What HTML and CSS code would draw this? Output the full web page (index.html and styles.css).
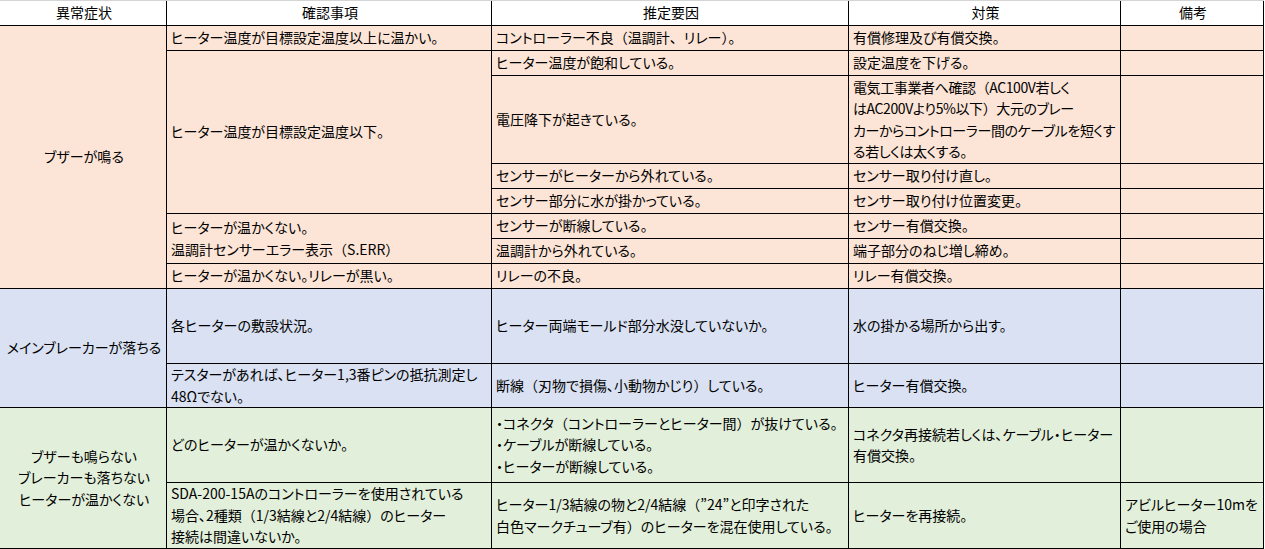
FILE: index.html
```html
<!DOCTYPE html>
<html lang="ja">
<head>
<meta charset="utf-8">
<title>異常症状</title>
<link rel="stylesheet" href="styles.css">
</head>
<body>
<div class="sheet">
  <div class="c h">異常症状</div>
  <div class="c h">確認事項</div>
  <div class="c h">推定要因</div>
  <div class="c h">対策</div>
  <div class="c h">備考</div>

  <div class="c o ctr s8">ブザーが鳴る</div>
  <div class="c o">ヒーター温度が目標設定温度以上に温かい。</div>
  <div class="c o">コントローラー不良<span class="p">（</span>温調計<span class="p">、</span>リレー<span class="p">）</span><span class="p">。</span></div>
  <div class="c o">有償修理及び有償交換。</div>
  <div class="c o"></div>

  <div class="c o s4">ヒーター温度が目標設定温度以下。</div>
  <div class="c o">ヒーター温度が飽和している。</div>
  <div class="c o">設定温度を下げる。</div>
  <div class="c o"></div>

  <div class="c o">電圧降下が起きている。</div>
  <div class="c o tight">電気工事業者へ確認<span class="p">（</span>AC100V若しく<br>はAC200Vより5%以下<span class="p">）</span>大元のブレー<br>カーからコントローラー間のケーブルを短くす<br>る若しくは太くする。</div>
  <div class="c o"></div>

  <div class="c o">センサーがヒーターから外れている。</div>
  <div class="c o">センサー取り付け直し。</div>
  <div class="c o"></div>

  <div class="c o">センサー部分に水が掛かっている。</div>
  <div class="c o">センサー取り付け位置変更。</div>
  <div class="c o"></div>

  <div class="c o s2">ヒーターが温かくない。<br>温調計センサーエラー表示<span class="p">（</span>S.ERR<span class="p">）</span></div>
  <div class="c o">センサーが断線している。</div>
  <div class="c o">センサー有償交換。</div>
  <div class="c o"></div>

  <div class="c o">温調計から外れている。</div>
  <div class="c o">端子部分のねじ増し締め。</div>
  <div class="c o"></div>

  <div class="c o">ヒーターが温かくない。リレーが黒い。</div>
  <div class="c o">リレーの不良。</div>
  <div class="c o">リレー有償交換。</div>
  <div class="c o"></div>

  <div class="c b ctr s2">メインブレーカーが落ちる</div>
  <div class="c b">各ヒーターの敷設状況。</div>
  <div class="c b">ヒーター両端モールド部分水没していないか。</div>
  <div class="c b">水の掛かる場所から出す。</div>
  <div class="c b"></div>

  <div class="c b">テスターがあれば、ヒーター1,3番ピンの抵抗測定し<br>48Ωでない。</div>
  <div class="c b">断線<span class="p">（</span>刃物で損傷、小動物かじり<span class="p">）</span>している。</div>
  <div class="c b">ヒーター有償交換。</div>
  <div class="c b"></div>

  <div class="c g ctr s2">ブザーも鳴らない<br>ブレーカーも落ちない<br>ヒーターが温かくない</div>
  <div class="c g">どのヒーターが温かくないか。</div>
  <div class="c g">・コネクタ<span class="p">（</span>コントローラーとヒーター間<span class="p">）</span>が抜けている。<br>・ケーブルが断線している。<br>・ヒーターが断線している。</div>
  <div class="c g">コネクタ再接続若しくは、ケーブル・ヒーター<br>有償交換。</div>
  <div class="c g"></div>

  <div class="c g">SDA-200-15Aのコントローラーを使用されている<br>場合、2種類<span class="p">（</span>1/3結線と2/4結線<span class="p">）</span>のヒーター<br>接続は間違いないか。</div>
  <div class="c g">ヒーター1/3結線の物と2/4結線<span class="p">（</span>”24”と印字された<br>白色マークチューブ有<span class="p">）</span>のヒーターを混在使用している。</div>
  <div class="c g">ヒーターを再接続。</div>
  <div class="c g">アビルヒーター10mを<br>ご使用の場合</div>
</div>
</body>
</html>
```

FILE: styles.css
```css
html, body {
  margin: 0;
  padding: 0;
  background: #ffffff;
}

.sheet {
  display: grid;
  width: 1264px;
  grid-template-columns: 167px 325px 357px 272px 143px;
  grid-template-rows: 25px 25px 25px 88px 25px 25px 25px 25px 25px 75px 44px 75px 66px;
  border-top: 1px solid #d4d4d4;
  font-family: "Noto Sans CJK JP", "Noto Sans", sans-serif;
  font-feature-settings: "palt";
  font-size: 14px;
  line-height: 21.5px;
  color: #000000;
}

.c {
  display: block;
  align-content: center;
  padding: 0 2px 0 4px;
  border-right: 1px solid #000000;
  border-bottom: 1px solid #000000;
  white-space: nowrap;
  overflow: hidden;
}

.c > .p {
  font-feature-settings: normal;
}

.tight {
  letter-spacing: -0.4px;
}

.h {
  text-align: center;
  background: #ffffff;
}

.ctr {
  text-align: center;
}

.o { background: #fce4d6; }
.b { background: #d9e1f2; }
.g { background: #e2efda; }

.s2 { grid-row: span 2; }
.s4 { grid-row: span 4; }
.s8 { grid-row: span 8; }
```
